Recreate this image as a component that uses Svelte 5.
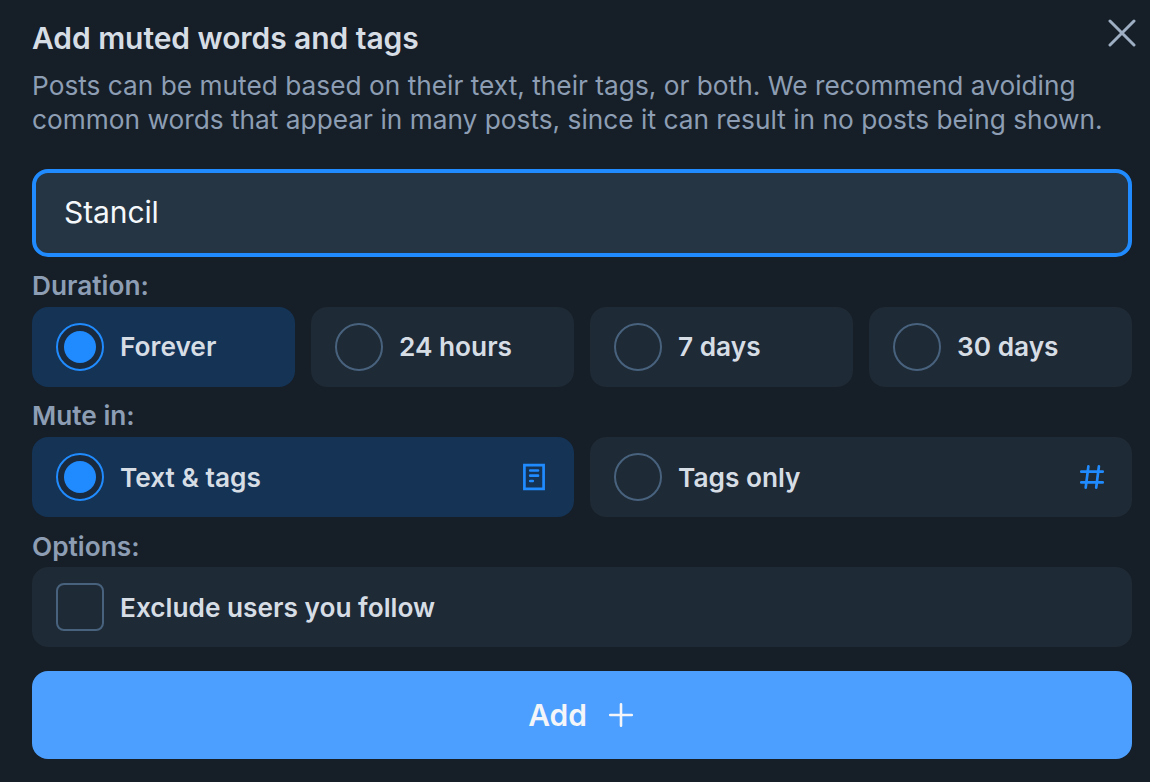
<script lang="ts">
    interface Option {
        value: string;
        label: string;
        icon?: "page" | "hash";
    }

    const durations: Option[] = [
        { value: "forever", label: "Forever" },
        { value: "24_hours", label: "24 hours" },
        { value: "7_days", label: "7 days" },
        { value: "30_days", label: "30 days" },
    ];

    const targets: Option[] = [
        { value: "content", label: "Text & tags", icon: "page" },
        { value: "tag", label: "Tags only", icon: "hash" },
    ];

    let word = $state("Stancil");
    let duration = $state("forever");
    let target = $state("content");
    let excludeFollowing = $state(false);
</script>

<div class="dialog" role="dialog" aria-labelledby="title">
    <header>
        <h1 id="title">Add muted words and tags</h1>
        <button class="close" aria-label="Close">
            <svg width="28" height="28" viewBox="0 0 28 28">
                <path d="M2 2 26 26M26 2 2 26" />
            </svg>
        </button>
    </header>
    <p class="description">
        Posts can be muted based on their text, their tags, or both. We
        recommend avoiding<br /> common words that appear in many posts, since it
        can result in no posts being shown.
    </p>

    <input
        class="word"
        type="text"
        aria-label="Muted word"
        spellcheck="false"
        bind:value={word}
    />

    <h2>Duration:</h2>
    <div class="row durations" role="radiogroup" aria-label="Duration">
        {#each durations as option}
            <button
                class="choice"
                class:selected={duration === option.value}
                role="radio"
                aria-checked={duration === option.value}
                onclick={() => (duration = option.value)}
            >
                <span class="radio"></span>
                <span class="label">{option.label}</span>
            </button>
        {/each}
    </div>

    <h2>Mute in:</h2>
    <div class="row" role="radiogroup" aria-label="Mute in">
        {#each targets as option}
            <button
                class="choice"
                class:selected={target === option.value}
                role="radio"
                aria-checked={target === option.value}
                onclick={() => (target = option.value)}
            >
                <span class="radio"></span>
                <span class="label">{option.label}</span>
                <svg class="icon" width="32" height="32" viewBox="0 0 32 32">
                    {#if option.icon === "page"}
                        <path d="M6.4 4.1h19.2v23.8H6.4z" />
                        <path
                            d="M12.2 9.5h7.8M12.2 14.7h7.8M12.2 20h2.6"
                            stroke-linecap="round"
                        />
                    {:else}
                        <path
                            d="M5.3 10.7h21.4M5.3 21.4h21.4M12.4 5.3 9.7 26.7M22.9 5.3l-2.7 21.4"
                            stroke-linecap="round"
                        />
                    {/if}
                </svg>
            </button>
        {/each}
    </div>

    <h2 class="options-title">Options:</h2>
    <div class="row">
        <button
            class="choice"
            class:selected={excludeFollowing}
            role="checkbox"
            aria-checked={excludeFollowing}
            onclick={() => (excludeFollowing = !excludeFollowing)}
        >
            <span class="checkbox"></span>
            <span class="label">Exclude users you follow</span>
        </button>
    </div>

    <button class="add">
        Add
        <svg width="26" height="26" viewBox="0 0 26 26">
            <path d="M13 2.2v21.6M2.2 13h21.6" />
        </svg>
    </button>
</div>

<style>
    :global(body) {
        background: #161e27;
    }

    .dialog {
        box-sizing: border-box;
        height: 782px;
        padding: 19px 18px 0 32px;
        overflow: hidden;
        background: #161e27;
        color: #d6dde5;
        font-family: Inter, "Liberation Sans", sans-serif;
    }

    button {
        padding: 0;
        border: none;
        background: none;
        color: inherit;
        font: inherit;
        cursor: pointer;
    }

    svg {
        flex: none;
        fill: none;
        stroke: currentColor;
    }

    header {
        display: flex;
        justify-content: space-between;
        height: 50px;
        margin-right: -4px;
    }

    h1 {
        margin: 0;
        font-size: 30px;
        font-weight: 600;
        letter-spacing: -0.06px;
        line-height: 38px;
    }

    .close {
        display: flex;
        align-self: flex-start;
        color: #9fafc3;
    }

    .close path {
        stroke-width: 3;
        stroke-linecap: round;
    }

    .description {
        margin: 0 0 32px;
        color: #8d9eb4;
        font-size: 26.25px;
        letter-spacing: 0.01px;
        line-height: 34px;
        white-space: nowrap;
    }

    .word {
        display: block;
        box-sizing: border-box;
        width: 100%;
        height: 88px;
        padding: 0 28px 2px;
        border: 4px solid #208bfe;
        border-radius: 16px;
        outline: none;
        background: #263543;
        color: #f5f8fb;
        font-family: inherit;
        font-size: 30px;
        letter-spacing: -0.1px;
    }

    h2 {
        height: 34px;
        margin: 12px 0 4px;
        color: #8d9eb4;
        font-size: 26.25px;
        font-weight: 600;
        line-height: 34px;
    }

    .options-title {
        margin: 13px 0 3px;
    }

    .row {
        display: flex;
        gap: 16px;
    }

    .choice {
        display: flex;
        flex: 1 1 0;
        align-items: center;
        gap: 16px;
        height: 80px;
        padding: 0 24px;
        border-radius: 16px;
        background: #1e2a35;
    }

    .choice.selected {
        background: #143355;
    }

    .label {
        flex: 1;
        font-size: 26.25px;
        font-weight: 600;
        text-align: left;
        white-space: nowrap;
    }

    .durations .label {
        padding-bottom: 2px;
    }

    .radio,
    .checkbox {
        display: grid;
        flex: none;
        box-sizing: border-box;
        width: 48px;
        height: 48px;
        place-items: center;
        border: 2px solid #48627e;
        border-radius: 50%;
        background: #1e2a35;
    }

    .checkbox {
        border-radius: 8px;
    }

    .selected .radio {
        border-color: #208bfe;
        background: #192a3f;
    }

    .selected .radio::after {
        width: 32px;
        height: 32px;
        border-radius: 50%;
        background: #208bfe;
        content: "";
    }

    .icon {
        color: #208bfe;
        stroke-width: 2.7;
    }

    .add {
        display: flex;
        align-items: center;
        justify-content: center;
        gap: 21px;
        width: 100%;
        height: 88px;
        margin-top: 24px;
        padding-right: 2px;
        border-radius: 16px;
        background: #4c9fff;
        color: #f3f5f8;
        font-size: 30px;
        font-weight: 600;
        letter-spacing: -0.06px;
    }

    .add path {
        stroke-width: 2.6;
        stroke-linecap: round;
    }
</style>
